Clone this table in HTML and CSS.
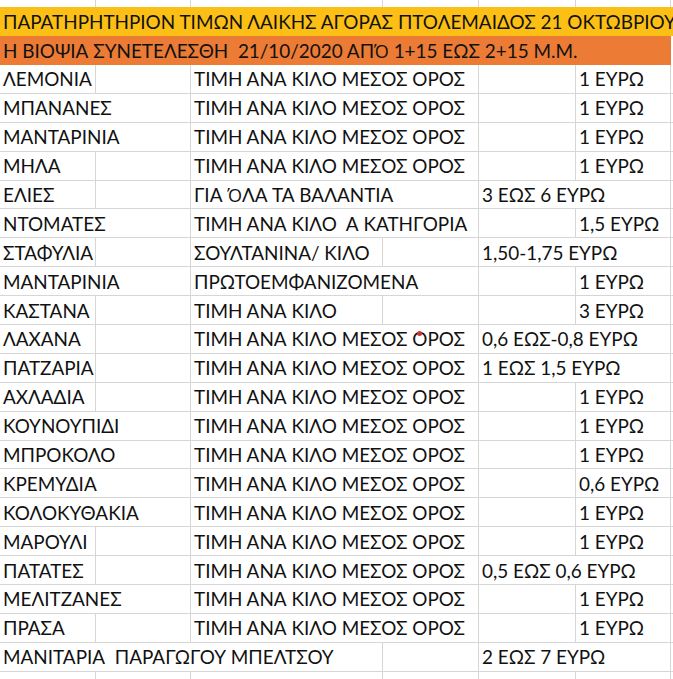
FILE: index.html
```html
<!DOCTYPE html>
<html lang="el">
<head>
<meta charset="utf-8">
<title>Παρατηρητήριο τιμών</title>
<link rel="stylesheet" href="styles.css">
</head>
<body>
<div class="sheet">
  <div class="c top"></div><div class="c top"></div><div class="c top"></div><div class="c top"></div><div class="c top"></div><div class="c top"></div><div class="c top"></div>

  <div class="h yellow">ΠΑΡΑΤΗΡΗΤΗΡΙΟΝ ΤΙΜΩΝ ΛΑΙΚΗΣ ΑΓΟΡΑΣ ΠΤΟΛΕΜΑΙΔΟΣ 21 ΟΚΤΩΒΡΙΟΥ</div>
  <div class="h orange">Η ΒΙΟΨΙΑ ΣΥΝΕΤΕΛΕΣΘΗ  21/10/2020 ΑΠ<span class="tonos">Ό</span> 1+15 ΕΩΣ 2+15 Μ.Μ.</div>
  <div class="h blank"></div>

  <div class="c">ΛΕΜΟΝΙΑ</div><div class="c"></div><div class="c s2">ΤΙΜΗ ΑΝΑ ΚΙΛΟ ΜΕΣΟΣ ΟΡΟΣ</div><div class="c"></div><div class="c">1 ΕΥΡΩ</div><div class="c"></div>
  <div class="c s2">ΜΠΑΝΑΝΕΣ</div><div class="c s2">ΤΙΜΗ ΑΝΑ ΚΙΛΟ ΜΕΣΟΣ ΟΡΟΣ</div><div class="c"></div><div class="c">1 ΕΥΡΩ</div><div class="c"></div>
  <div class="c s2">ΜΑΝΤΑΡΙΝΙΑ</div><div class="c s2">ΤΙΜΗ ΑΝΑ ΚΙΛΟ ΜΕΣΟΣ ΟΡΟΣ</div><div class="c"></div><div class="c">1 ΕΥΡΩ</div><div class="c"></div>
  <div class="c">ΜΗΛΑ</div><div class="c"></div><div class="c s2">ΤΙΜΗ ΑΝΑ ΚΙΛΟ ΜΕΣΟΣ ΟΡΟΣ</div><div class="c"></div><div class="c">1 ΕΥΡΩ</div><div class="c"></div>
  <div class="c">ΕΛΙΕΣ</div><div class="c"></div><div class="c s2">ΓΙΑ <span class="tonos">Ό</span>ΛΑ ΤΑ ΒΑΛΑΝΤΙΑ</div><div class="c s2">3 ΕΩΣ 6 ΕΥΡΩ</div><div class="c"></div>
  <div class="c s2">ΝΤΟΜΑΤΕΣ</div><div class="c s2">ΤΙΜΗ ΑΝΑ ΚΙΛΟ  Α ΚΑΤΗΓΟΡΙΑ</div><div class="c"></div><div class="c">1,5 ΕΥΡΩ</div><div class="c"></div>
  <div class="c">ΣΤΑΦΥΛΙΑ</div><div class="c"></div><div class="c">ΣΟΥΛΤΑΝΙΝΑ/ ΚΙΛΟ</div><div class="c"></div><div class="c s2">1,50-1,75 ΕΥΡΩ</div><div class="c"></div>
  <div class="c s2">ΜΑΝΤΑΡΙΝΙΑ</div><div class="c s2">ΠΡΩΤΟΕΜΦΑΝΙΖΟΜΕΝΑ</div><div class="c"></div><div class="c">1 ΕΥΡΩ</div><div class="c"></div>
  <div class="c">ΚΑΣΤΑΝΑ</div><div class="c"></div><div class="c">ΤΙΜΗ ΑΝΑ ΚΙΛΟ</div><div class="c"></div><div class="c"></div><div class="c">3 ΕΥΡΩ</div><div class="c"></div>
  <div class="c">ΛΑΧΑΝΑ</div><div class="c"></div><div class="c s2 mark">ΤΙΜΗ ΑΝΑ ΚΙΛΟ ΜΕΣΟΣ ΟΡΟΣ<span class="dot"></span></div><div class="c s2">0,6 ΕΩΣ-0,8 ΕΥΡΩ</div><div class="c"></div>
  <div class="c">ΠΑΤΖΑΡΙΑ</div><div class="c"></div><div class="c s2">ΤΙΜΗ ΑΝΑ ΚΙΛΟ ΜΕΣΟΣ ΟΡΟΣ</div><div class="c s2">1 ΕΩΣ 1,5 ΕΥΡΩ</div><div class="c"></div>
  <div class="c">ΑΧΛΑΔΙΑ</div><div class="c"></div><div class="c s2">ΤΙΜΗ ΑΝΑ ΚΙΛΟ ΜΕΣΟΣ ΟΡΟΣ</div><div class="c"></div><div class="c">1 ΕΥΡΩ</div><div class="c"></div>
  <div class="c s2">ΚΟΥΝΟΥΠΙΔΙ</div><div class="c s2">ΤΙΜΗ ΑΝΑ ΚΙΛΟ ΜΕΣΟΣ ΟΡΟΣ</div><div class="c"></div><div class="c">1 ΕΥΡΩ</div><div class="c"></div>
  <div class="c s2">ΜΠΡΟΚΟΛΟ</div><div class="c s2">ΤΙΜΗ ΑΝΑ ΚΙΛΟ ΜΕΣΟΣ ΟΡΟΣ</div><div class="c"></div><div class="c">1 ΕΥΡΩ</div><div class="c"></div>
  <div class="c s2">ΚΡΕΜΥΔΙΑ</div><div class="c s2">ΤΙΜΗ ΑΝΑ ΚΙΛΟ ΜΕΣΟΣ ΟΡΟΣ</div><div class="c"></div><div class="c">0,6 ΕΥΡΩ</div><div class="c"></div>
  <div class="c s2">ΚΟΛΟΚΥΘΑΚΙΑ</div><div class="c s2">ΤΙΜΗ ΑΝΑ ΚΙΛΟ ΜΕΣΟΣ ΟΡΟΣ</div><div class="c"></div><div class="c">1 ΕΥΡΩ</div><div class="c"></div>
  <div class="c">ΜΑΡΟΥΛΙ</div><div class="c"></div><div class="c s2">ΤΙΜΗ ΑΝΑ ΚΙΛΟ ΜΕΣΟΣ ΟΡΟΣ</div><div class="c"></div><div class="c">1 ΕΥΡΩ</div><div class="c"></div>
  <div class="c">ΠΑΤΑΤΕΣ</div><div class="c"></div><div class="c s2">ΤΙΜΗ ΑΝΑ ΚΙΛΟ ΜΕΣΟΣ ΟΡΟΣ</div><div class="c s2">0,5 ΕΩΣ 0,6 ΕΥΡΩ</div><div class="c"></div>
  <div class="c s2">ΜΕΛΙΤΖΑΝΕΣ</div><div class="c s2">ΤΙΜΗ ΑΝΑ ΚΙΛΟ ΜΕΣΟΣ ΟΡΟΣ</div><div class="c"></div><div class="c">1 ΕΥΡΩ</div><div class="c"></div>
  <div class="c">ΠΡΑΣΑ</div><div class="c"></div><div class="c s2">ΤΙΜΗ ΑΝΑ ΚΙΛΟ ΜΕΣΟΣ ΟΡΟΣ</div><div class="c"></div><div class="c">1 ΕΥΡΩ</div><div class="c"></div>
  <div class="c s3">ΜΑΝΙΤΑΡΙΑ  ΠΑΡΑΓΩΓΟΥ ΜΠΕΛΤΣΟΥ</div><div class="c"></div><div class="c s2">2 ΕΩΣ 7 ΕΥΡΩ</div><div class="c"></div>

  <div class="c"></div><div class="c"></div><div class="c"></div><div class="c"></div><div class="c"></div><div class="c"></div><div class="c"></div>
</div>
</body>
</html>
```
FILE: styles.css
```css
html, body {
  margin: 0;
  padding: 0;
  overflow: hidden;
  background: #ffffff;
}

.sheet {
  display: grid;
  grid-template-columns: 96px 95px 192px 96px 97px 95px 60px;
  grid-template-rows: 7px 29px 29px repeat(22, 28.9px);
  width: 731px;
  font-family: "Lato", "Liberation Sans", sans-serif;
  font-size: 18.9px;
  color: #111111;
}

.c {
  box-sizing: border-box;
  border-right: 1px solid #d6d6d6;
  border-bottom: 1px solid #d6d6d6;
  padding-left: 3px;
  white-space: pre;
  overflow: hidden;
  display: flex;
  align-items: center;
}

.c.top {
  border-bottom: none;
}

.s2 { grid-column: span 2; }
.s3 { grid-column: span 3; }

.h {
  box-sizing: border-box;
  padding-left: 3px;
  white-space: pre;
  overflow: hidden;
  display: flex;
  align-items: center;
}

.tonos {
  font-family: "Open Sans", "Noto Sans", sans-serif;
  font-size: 18px;
}

.yellow {
  grid-column: 1 / -1;
  background: #fcbf16;
}

.orange {
  grid-column: 1 / 7;
  background: #eb7b35;
}

.blank {
  background: #ffffff;
}

.mark {
  position: relative;
}

.dot {
  position: absolute;
  left: 226px;
  top: 6px;
  width: 5px;
  height: 5px;
  border-radius: 50%;
  background: #c9343c;
}
```
